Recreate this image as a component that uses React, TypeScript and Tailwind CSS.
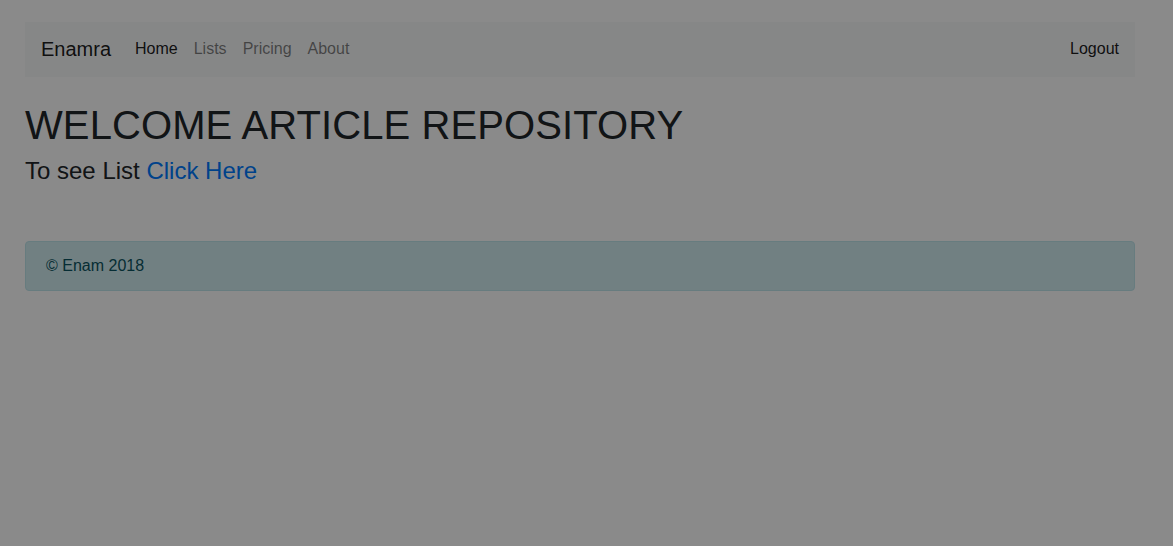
export default function App() {
  return (
    <div className="relative min-h-[546px] bg-white text-[#212529]" style={{ fontFamily: '"Liberation Sans", Arial, sans-serif' }}>
      <div className="px-[25px] pt-[22px] w-[1160px]">
        <nav className="flex items-center h-[55px] bg-[#f8f9fa] px-4 pb-[2px]">
          <span className="text-[20px] leading-[30px] text-black/90 mr-6">Enamra</span>
          <div className="flex text-[16px] leading-6">
            <span className="pr-2 text-black/90">Home</span>
            <span className="px-2 text-black/50">Lists</span>
            <span className="px-2 text-black/50">Pricing</span>
            <span className="px-2 text-black/50">About</span>
          </div>
          <span className="ml-auto text-[16px] leading-6 text-black/90">Logout</span>
        </nav>
        <h1 className="mt-[24px] text-[40px] leading-[48px] mb-[7px] tracking-[0.1px]">WELCOME ARTICLE REPOSITORY</h1>
        <h4 className="text-[24px] leading-[29px] mb-2">
          To see List <span className="text-[#007bff]">Click Here</span>
        </h4>
        <div className="mt-[56px] rounded-[4px] border border-[#bee5eb] bg-[#d1ecf1] text-[#0c5460] px-5 py-3 text-[16px] leading-6">
          © Enam 2018
        </div>
      </div>
      <div className="fixed inset-0 bg-black/[0.46]" />
    </div>
  );
}
